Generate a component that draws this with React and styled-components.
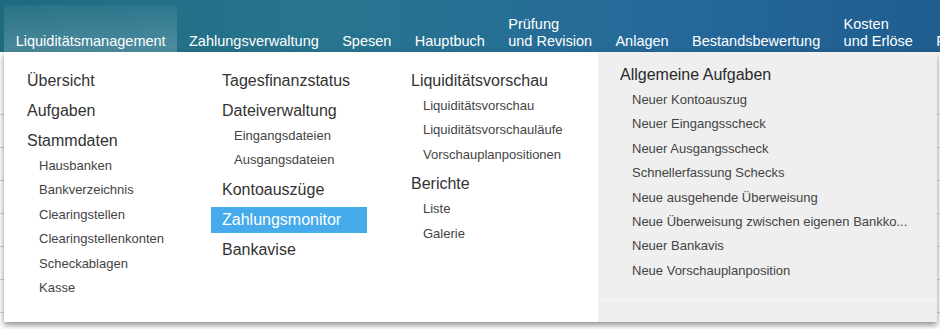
import React from 'react';
import styled, { createGlobalStyle } from 'styled-components';

const GlobalStyle = createGlobalStyle`
    html, body {
        margin: 0;
        padding: 0;
        background: #fff;
        font-family: "Liberation Sans", Arial, sans-serif;
    }
`;

const navItems = [
    ['Liquiditätsmanagement'],
    ['Zahlungsverwaltung'],
    ['Spesen'],
    ['Hauptbuch'],
    ['Prüfung', 'und Revision'],
    ['Anlagen'],
    ['Bestandsbewertung'],
    ['Kosten', 'und Erlöse'],
    ['Finanzen'],
];

const columns = [
    [
        { label: 'Übersicht' },
        { label: 'Aufgaben' },
        { label: 'Stammdaten', children: ['Hausbanken', 'Bankverzeichnis', 'Clearingstellen', 'Clearingstellenkonten', 'Scheckablagen', 'Kasse'] },
    ],
    [
        { label: 'Tagesfinanzstatus' },
        { label: 'Dateiverwaltung', children: ['Eingangsdateien', 'Ausgangsdateien'] },
        { label: 'Kontoauszüge' },
        { label: 'Zahlungsmonitor', active: true },
        { label: 'Bankavise' },
    ],
    [
        { label: 'Liquiditätsvorschau', children: ['Liquiditätsvorschau', 'Liquiditätsvorschauläufe', 'Vorschauplanpositionen'] },
        { label: 'Berichte', children: ['Liste', 'Galerie'] },
    ],
];

const tasks = [
    'Neuer Kontoauszug',
    'Neuer Eingangsscheck',
    'Neuer Ausgangsscheck',
    'Schnellerfassung Schecks',
    'Neue ausgehende Überweisung',
    'Neue Überweisung zwischen eigenen Bankko...',
    'Neuer Bankavis',
    'Neue Vorschauplanposition',
];

export default function App() {
    return (
        <Page>
            <GlobalStyle />
            <Header>
                {navItems.map((lines, i) => (
                    <NavItem key={i} $active={i === 0}>
                        {lines.map(l => <span key={l}>{l}</span>)}
                    </NavItem>
                ))}
            </Header>

            <Content>
                {[0, 1, 2, 3, 4, 5, 6].map(i => (
                    <ContentRow key={i} />
                ))}
            </Content>

            <Dropdown>
                {columns.map((col, ci) => (
                    <Column key={ci}>
                        {col.map(group => (
                            <React.Fragment key={group.label}>
                                <Heading $active={group.active}>{group.label}</Heading>
                                {group.children && group.children.map(c => (
                                    <SubItem key={c}>{c}</SubItem>
                                ))}
                            </React.Fragment>
                        ))}
                    </Column>
                ))}
                <TaskColumn>
                    <TaskList>
                        <TaskHeading>Allgemeine Aufgaben</TaskHeading>
                        {tasks.map(t => <TaskItem key={t}>{t}</TaskItem>)}
                    </TaskList>
                    <TaskFooter />
                </TaskColumn>
            </Dropdown>
        </Page>
    );
}

const Page = styled.div`
    position: relative;
    width: 940px;
    height: 329px;
    overflow: hidden;
    background: #fff;
`;

const Header = styled.nav`
    display: flex;
    align-items: flex-end;
    height: 52px;
    padding-left: 4px;
    box-sizing: border-box;
    background: linear-gradient(90deg, #1e6b80 0%, #27758f 35%, #25699a 70%, #1f5d8f 100%);
    white-space: nowrap;
    overflow: hidden;
`;

const NavItem = styled.div`
    display: flex;
    flex-direction: column;
    justify-content: flex-end;
    align-self: stretch;
    margin-top: 5px;
    padding: 0 11.7px 2px;
    font-size: 14.5px;
    line-height: 17px;
    color: #fff;
    background: ${p => p.$active
        ? 'linear-gradient(180deg, rgba(255,255,255,0.05), rgba(255,255,255,0.2))'
        : 'transparent'};
`;

const Content = styled.div`
    padding: 30px 0 0;
`;

const ContentRow = styled.div`
    height: 32px;
    border-bottom: 1px solid #d4d4d4;
`;

const Dropdown = styled.div`
    position: absolute;
    top: 52px;
    left: 4px;
    width: 933px;
    display: grid;
    grid-template-columns: 207px 189px 198px 1fr;
    background: #fff;
    box-shadow: 0 3px 6px rgba(0, 0, 0, 0.45);
    color: #333;
    white-space: nowrap;
`;

const Column = styled.div`
    display: flex;
    flex-direction: column;
    align-items: flex-start;
    padding: 12px 33px 22px 0;
    &:first-child {
        padding-left: 12px;
    }
`;

const Heading = styled.div`
    box-sizing: border-box;
    width: 156px;
    margin-top: 4px;
    padding-left: 11px;
    font-size: 16px;
    line-height: 26px;
    height: 26px;
    color: ${p => p.$active ? '#fff' : '#333'};
    background: ${p => p.$active ? '#45abea' : 'transparent'};
`;

const SubItem = styled.div`
    padding-left: 23px;
    font-size: 13px;
    line-height: 24.4px;
    height: 24.4px;
    color: #444;
`;

const TaskColumn = styled.div`
    display: flex;
    flex-direction: column;
    background: #efefef;
`;

const TaskList = styled.div`
    flex: 1;
    padding: 10px 0 0 22px;
`;

const TaskHeading = styled.div`
    font-size: 16px;
    line-height: 26px;
    color: #2a2a2a;
`;

const TaskItem = styled.div`
    padding-left: 12px;
    font-size: 13px;
    line-height: 24.4px;
    color: #444;
`;

const TaskFooter = styled.div`
    height: 21px;
    border-top: 1px solid #f6f6f6;
`;
